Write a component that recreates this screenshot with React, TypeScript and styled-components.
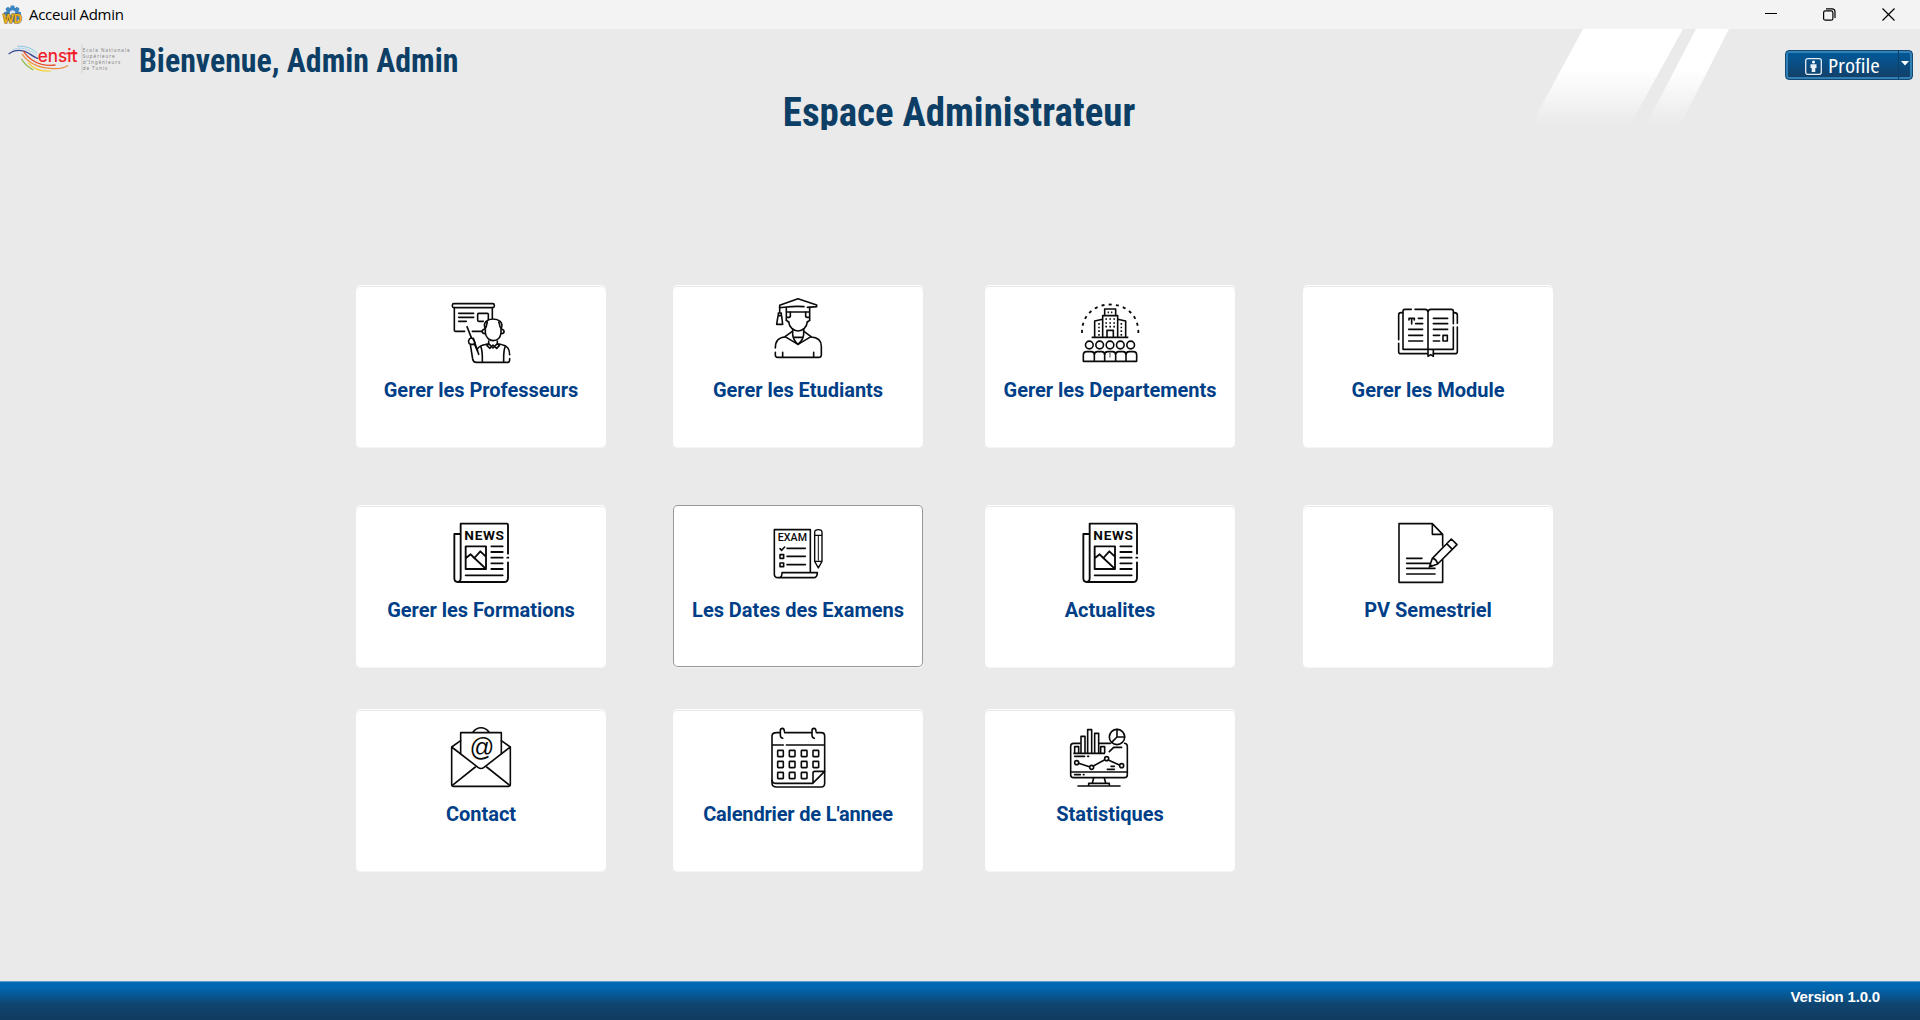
import React from "react";
import styled, { createGlobalStyle } from "styled-components";

const GlobalStyle = createGlobalStyle`
  html, body { margin: 0; padding: 0; overflow: hidden; }
  * { box-sizing: border-box; }
`;

const Window = styled.div`
  width: 1920px;
  height: 1020px;
  display: flex;
  flex-direction: column;
  background: #eaeaea;
  font-family: Roboto, "Liberation Sans", sans-serif;
  overflow: hidden;
`;

const TitleBar = styled.header`
  height: 29px;
  flex: none;
  display: flex;
  align-items: center;
  justify-content: space-between;
  background: #f3f3f3;
`;

const TitleGroup = styled.div`
  display: flex;
  align-items: center;
  gap: 6px;
  padding-left: 2px;
`;

const TitleText = styled.span`
  margin-top: -2px;
  font: 400 15px/20px "Open Sans", sans-serif;
  letter-spacing: -0.3px;
  color: #000;
`;

const WindowControls = styled.div`
  display: flex;
  gap: 46px;
  padding-right: 25px;
  svg { display: block; }
`;

const TopArea = styled.section`
  height: 256px;
  flex: none;
  display: flex;
  flex-direction: column;
  position: relative;
`;

const Slashes = styled.svg`
  position: absolute;
  left: 1530px;
  top: 0;
`;

const TopRow = styled.div`
  height: 59px;
  display: flex;
  align-items: flex-start;
  padding: 0 7px;
`;

const Logo = styled.svg`
  margin-top: 14px;
  flex: none;
  overflow: visible;
`;

const Welcome = styled.h1`
  margin: 12px 0 0 9px;
  font: 700 33px/40px "Roboto Condensed", Roboto, sans-serif;
  font-stretch: 75%;
  color: #0d3f66;
  white-space: nowrap;
  transform: scaleX(0.965);
  transform-origin: 0 0;
`;

const ProfileButton = styled.button`
  margin: 21px 0 0 auto;
  width: 128px;
  height: 30px;
  padding: 0;
  display: flex;
  align-items: stretch;
  border: 1px solid #124a75;
  border-radius: 4px;
  background: linear-gradient(#005a9c, #143f66);
  box-shadow: inset 0 0 0 2px #3280b4;
  position: relative;
`;

const ProfileMain = styled.span`
  width: 113px;
  display: flex;
  align-items: center;
  gap: 6px;
  padding: 2px 0 0 19px;
  border-right: 1px solid #0d3f68;
  svg { flex: none; }
`;

const ProfileLabel = styled.span`
  font: 400 20px/24px "Open Sans", sans-serif;
  font-stretch: 75%;
  color: #fff;
  transform: scaleX(1.15);
  transform-origin: 0 50%;
`;

const ProfileArrow = styled.span`
  flex: 1;
  display: flex;
  align-items: center;
  padding: 0 0 3px 2px;
`;

const PageTitle = styled.h2`
  margin: 0;
  height: 42px;
  overflow: hidden;
  padding-right: 2px;
  text-align: center;
  font: 700 41px/48px "Roboto Condensed", Roboto, sans-serif;
  font-stretch: 75%;
  color: #0d3f66;
  transform: scaleX(0.948);
`;

const Board = styled.main`
  flex: 1;
  display: grid;
  grid-template-columns: 317px 312px 318px 250px;
  grid-template-rows: 220px 204px 163px;
  padding-left: 356px;
`;

const Card = styled.button<{ $active?: boolean }>`
  width: 250px;
  height: ${(p) => (p.$active ? 162 : 163)}px;
  padding: 18px 0 0;
  display: flex;
  flex-direction: column;
  align-items: center;
  border: 0;
  border-radius: 5px;
  background: #fff;
  box-shadow: ${(p) =>
    p.$active
      ? "inset 0 0 0 1px #989898, 0 1px #f3f3f3"
      : "inset 0 1px #ffffff, inset 0 2px #e9e9e9, inset 0 -1px #f5f5f5"};
`;

const CardIcon = styled.svg`
  width: 60px;
  height: 60px;
  flex: none;
  overflow: visible;
  fill: none;
  stroke: #0a0a0a;
  stroke-width: 4.8;
  stroke-linecap: round;
  stroke-linejoin: round;
`;

const IconText = styled.text`
  fill: #0a0a0a;
  stroke: none;
`;

const CardLabel = styled.span<{ $tracking?: number }>`
  margin-top: 15px;
  font: 700 20px/24px Roboto, sans-serif;
  letter-spacing: ${(p) => p.$tracking ?? -0.03}px;
  color: #003f87;
  white-space: nowrap;
`;

const Footer = styled.footer`
  height: 39px;
  flex: none;
  display: flex;
  justify-content: flex-end;
  padding: 5px 40px 0 0;
  border-top: 1px solid #5b9cc9;
  background: linear-gradient(#0069b4 0, #0066b0 15%, #10446f 60%, #113b60 100%);
  font: 700 15px/20px "Liberation Sans", Arial, sans-serif;
  letter-spacing: -0.18px;
  color: #fff;
`;

const GearIcon = () => (
  <svg width="21" height="20" viewBox="0 0 21 20">
    <g fill="#3d83bf">
      <circle cx="10.5" cy="8.6" r="6.4" />
      {[0, 45, 90, 135, 180, 225, 270, 315].map((a) => (
        <rect key={a} x="8.5" y="0.4" width="4" height="4" rx="1" transform={`rotate(${a} 10.5 8.8)`} />
      ))}
    </g>
    <circle cx="10.5" cy="8" r="2.8" fill="#d5e6f3" />
    <text x="10.4" y="17.8" textAnchor="middle" fontFamily="Liberation Sans" fontWeight="700" fontSize="12.5" textLength="19" lengthAdjust="spacingAndGlyphs" fill="#eeb41c" stroke="#6b5210" strokeWidth="1" paintOrder="stroke">WD</text>
  </svg>
);

const EnsitLogo = () => (
  <Logo width="123" height="32" viewBox="20 130 369 96" fill="none" strokeLinecap="round">
    <path d="M26 162 C45 148 70 150 84 160 C96 168 104 174 112 176" stroke="#3a4a94" strokeWidth="4" />
    <path d="M38 150 C60 140 84 146 108 166" stroke="#a9d4ea" strokeWidth="3" />
    <path d="M52 140 C76 138 96 146 110 160" stroke="#8ac7e6" strokeWidth="3" />
    <path d="M70 156 C84 176 100 188 124 194 C142 198 152 198 164 196" stroke="#e8502c" strokeWidth="4" />
    <path d="M66 164 C86 192 116 204 150 206 C172 208 190 206 202 198" stroke="#ee8b3a" strokeWidth="3.5" />
    <path d="M64 178 C70 192 84 202 98 210" stroke="#8dbb4a" strokeWidth="3.5" />
    <path d="M84 190 C100 208 124 216 150 214" stroke="#f4d338" strokeWidth="3.5" />
    <text x="112" y="188" fontFamily="Inter" fontWeight="500" fontSize="52" textLength="119" lengthAdjust="spacingAndGlyphs" fill="#f21f2b">ensit</text>
    <path d="M200 161 H229" stroke="#f21f2b" strokeWidth="5" />
    <path d="M245 134 V220" stroke="#c9c9c9" strokeWidth="2" />
    <g fontFamily="Noto Sans" fontSize="14" fill="#858585">
      <text x="247" y="157" textLength="141">Ecole Nationale</text>
      <text x="247" y="175" textLength="96">Supérieure</text>
      <text x="247" y="193" textLength="113">d'Ingénieurs</text>
      <text x="247" y="210" textLength="74">de Tunis</text>
    </g>
  </Logo>
);

const TeacherIcon = () => (
  <CardIcon viewBox="333 84 180 180">
    <rect x="337" y="86" width="126" height="12" rx="5" />
    <path d="M343 98 V166 Q343 169 346 169 H374 M397 169 H426 M457 98 V130" />
    <path d="M356 115 H401 M356 127 H401 M356 139 H379" />
    <path d="M430 139 H416 Q413 139 413 136 V118 Q413 115 416 115 H442 Q445 115 445 118 V134" />
    <path d="M435 160 C428 142 443 132 459 132 C476 132 491 142 484 160 M442 142 C438 150 441 155 436 160 V174 C438 189 449 197 459 197 C471 197 481 189 483 174 V160 C477 155 481 148 476 142" />
    <path d="M434 162 C424 164 424 176 435 176 M484 162 C495 164 495 176 484 176" />
    <path d="M381 155 L394 188 M400 190 L416 238" />
    <path d="M394 188 C384 192 383 204 391 208 H401 C408 204 402 194 394 188 M391 208 L398 252 Q400 262 409 262 H504 Q509 262 509 251 M404 209 L412 227" />
    <path d="M413 221 C418 210 433 210 446 206 V198 M472 198 V206 C490 209 509 212 509 239 M446 206 L459 219 L472 206 M446 206 L441 212 L450 220 L459 210 L470 220 L478 212 L472 206" />
    <path d="M422 214 C428 225 427 240 427 260 M496 214 C490 225 491 240 491 260" />
  </CardIcon>
);

const StudentIcon = () => (
  <CardIcon viewBox="324 84 180 180">
    <path d="M432 95 C400 92 375 97 359 98 V91 L414 71 L470 90 V95 L442 97" />
    <path d="M359 97 V112 M355 114 H364 V122 H355 Z M354 123 L350 148 H368 L365 123 M379 98 V136 M449 98 V136 M381 111 H447" />
    <path d="M391 112 V125 Q385 128 381 127 M437 112 V125 Q443 128 448 127 M379 136 Q384 139 386 142 M449 136 Q444 139 442 142 M386 140 C387 156 401 168 414 168 C428 168 441 156 442 140" />
    <path d="M398 163 V178 C399 193 407 202 414 208 C421 202 430 193 431 178 V163" />
    <path d="M397 169 L375 185 L414 208 L453 185 L432 169 M402 187 H427" />
    <path d="M375 186 C356 187 346 198 346 219 M346 232 V240 Q346 247 353 247 H477 Q484 247 484 240 V214 C484 196 471 187 453 186 M368 232 V246 M461 232 V246" />
  </CardIcon>
);

const DepartmentIcon = () => (
  <CardIcon viewBox="330 84 180 180">
    <path d="M336 174 C334 60 507 60 505 174" pathLength="264" strokeDasharray="9 12.25" strokeWidth="5.4" strokeLinecap="butt" />
    <path d="M404 121 V102 H437 V121 M398 187 V122 H443 V187 M374 187 V138 L398 133 M467 187 V138 L443 133 M365 187 H475 M411 187 V166 H430 V187" strokeLinecap="butt" />
    <path d="M413 112 H429" strokeDasharray="4 6" strokeLinecap="butt" />
    <path d="M406 132 H436 M406 144 H436 M406 155 H436" strokeDasharray="5 7" strokeLinecap="butt" />
    <path d="M387 144 V186 M454 144 V186" strokeDasharray="5 6" strokeLinecap="butt" />
    {[358, 389, 420, 451, 482].map((x) => (
      <circle key={x} cx={x} cy="210" r="11.5" />
    ))}
    <path d="M340 259 V240 Q340 230 350 230 H364 Q373 230 373 240 Q373 230 382 230 H395 Q404 230 404 240 Q404 230 413 230 H428 Q437 230 437 240 Q437 230 446 230 H459 Q468 230 468 240 Q468 230 477 230 H490 Q500 230 500 240 V259 Z M373 240 V259 M404 240 V259 M437 240 V259 M468 240 V259" />
    <path d="M420 235 V246" strokeWidth="4" stroke="#777" />
  </CardIcon>
);

const BookIcon = () => (
  <CardIcon viewBox="324 84 180 180">
    <path d="M364 103 H345 Q339 103 339 109 V223 H490 V156 M490 146 V109 Q490 103 484 103 H423 Q414 103 414 112 V223 M414 112 Q414 103 405 103 H375" />
    <path d="M338 113 H333 Q326 113 326 120 V194 M326 205 V230 Q326 236 332 236 H413 M430 236 H495 Q502 236 502 230 V156 M502 145 V120 Q502 113 492 113" />
    <path d="M414 225 V244 L422 239 L430 244 V225 M357 135 V130 H373 V135 M365 130 V147 M385 130 H398 M377 146 H398 M356 163 H398 M356 181 H398 M356 198 H398" />
    <path d="M430 130 H473 M430 146 H473 M430 163 H473 M430 181 H449 M430 198 H449 M459 181 H472 V198 H459 Z" />
  </CardIcon>
);

const NewsIcon = () => (
  <CardIcon viewBox="333 84 180 180">
    <g strokeWidth="5.6">
      <path d="M504 176 V90 Q504 86 500 86 H362 V250 Q362 261 353 261 Q343 261 343 250 V117 H361 M353 261 H492 Q504 261 504 248 V202" />
      <path d="M502 188 H505 M377 154 H438 V222 H377 Z M378 189 L392 178 L403 189 L421 169 L437 184 M403 189 L437 221" />
      <path d="M454 154 H488 M454 171 H488 M454 188 H488 M454 205 H488 M454 222 H488 M377 241 H488" />
    </g>
    <IconText x="373" y="136" fontFamily="Roboto" fontWeight="700" fontSize="41" textLength="119">NEWS</IconText>
  </CardIcon>
);

const ExamIcon = () => (
  <CardIcon viewBox="324 84 180 180">
    <path d="M451 231 V104 H343 V237 Q343 248 354 248 H460 Q472 248 472 233 H366 Q367 248 354 248" />
    <path d="M360 161 L365 166 L374 156 M381 160 H436 M381 184 H436 M381 209 H436 M360 179 H371 V190 H360 Z M360 204 H371 V215 H360 Z" />
    <path d="M464 199 V112 Q464 104 475 104 Q486 104 486 112 V199 L475 219 Z M464 121 H486 M464 199 H486" strokeWidth="4.2" />
    <path d="M475 123 V197" strokeWidth="3" strokeLinecap="butt" />
    <path d="M473 214 H477" strokeWidth="3" />
    <IconText x="353" y="138" fontFamily="Roboto" fontWeight="500" fontSize="32" textLength="88" lengthAdjust="spacing">EXAM</IconText>
  </CardIcon>
);

const PvIcon = () => (
  <CardIcon viewBox="324 84 180 180">
    <path d="M458 153 V118 L427 86 H327 V262 H458 V194 M427 86 V118 H458" />
    <path d="M350 190 H396 M350 205 H421 M350 220 H435 M350 237 H435" />
    <path d="M418 216 L427 190 L484 132 L501 149 L443 207 Z M427 190 Q439 191 443 207 M470 146 L487 163 M418 216 L425 211" />
  </CardIcon>
);

const ContactIcon = () => (
  <CardIcon viewBox="333 81 180 180">
    <path d="M335 141 V254 Q335 259 340 259 H506 Q511 259 511 254 V141 L432 202 Q423 209 414 202 Z M335 141 L362 122 M511 141 L484 122" />
    <path d="M362 161 V98 H484 V161 M399 96 C412 79 434 79 447 96 M337 256 L406 201 M509 256 L440 201" />
    <IconText x="388" y="169" fontFamily="Liberation Sans" fontSize="76" fontStyle="italic" textLength="74" lengthAdjust="spacingAndGlyphs">@</IconText>
  </CardIcon>
);

const CalendarIcon = () => (
  <CardIcon viewBox="324 81 180 180">
    <path d="M360 98 H350 Q336 98 336 108 V250 Q336 261 350 261 H484 Q494 261 494 250 V108 Q494 98 484 98 H469 M374 98 H455 M336 135 H370 M379 135 H494" />
    <path d="M361 105 V92 Q361 85 367 85 Q373 85 373 94 M361 105 Q361 113 368 115 M456 105 V92 Q456 85 462 85 Q468 85 468 94 M456 105 Q456 113 463 115" />
    {[151, 184, 217].map((y) =>
      [353, 388, 424, 459].map((x) =>
        y === 217 && x === 459 ? null : <rect key={`${x}-${y}`} x={x} y={y} width="17" height="19" rx="2" />
      )
    )}
    <path d="M336 241 Q337 250 348 250 H458 L494 214 H464 Q459 214 459 220 V250" />
  </CardIcon>
);

const StatsIcon = () => (
  <CardIcon viewBox="330 81 180 180">
    <path d="M330 130 H311 Q302 130 302 139 V224 Q302 233 311 233 H463 Q472 233 472 224 V139 Q472 132 464 130 M387 130 H421 M303 216 H471" />
    <path d="M310 160 H405 M314 159 V140 H326 V159 M333 159 V109 H345 V159 M353 159 V89 H365 V159 M374 159 V100 H386 V159 M392 159 V140 H404 V159" strokeLinecap="butt" />
    <circle cx="441" cy="111" r="23" />
    <path d="M441 88 V111 L425 127 M441 111 H464 M418 155 L431 142 H455 M314 169 H344 M353 169 H356 M423 199 H433 M412 208 H433 M314 224 H331 M340 224 H342" />
    <path d="M326 190 L358 200 M370 198 L403 180 M415 180 L448 195" />
    <circle cx="320" cy="188" r="6" />
    <circle cx="365" cy="202" r="6" />
    <circle cx="410" cy="176" r="6" />
    <circle cx="455" cy="197" r="6" />
    <path d="M371 234 L367 249 M403 234 L407 249 M356 258 V250 H418 V258 M324 258 H450" />
  </CardIcon>
);

const cards: { label: string; Icon: React.FC; active?: boolean; tracking?: number }[] = [
  { label: "Gerer les Professeurs", Icon: TeacherIcon },
  { label: "Gerer les Etudiants", Icon: StudentIcon },
  { label: "Gerer les Departements", Icon: DepartmentIcon },
  { label: "Gerer les Module", Icon: BookIcon },
  { label: "Gerer les Formations", Icon: NewsIcon },
  { label: "Les Dates des Examens", Icon: ExamIcon, active: true },
  { label: "Actualites", Icon: NewsIcon },
  { label: "PV Semestriel", Icon: PvIcon },
  { label: "Contact", Icon: ContactIcon },
  { label: "Calendrier de L'annee", Icon: CalendarIcon, tracking: -0.18 },
  { label: "Statistiques", Icon: StatsIcon },
];

export default function App() {
  return (
    <Window>
      <GlobalStyle />
      <TitleBar>
        <TitleGroup>
          <GearIcon />
          <TitleText>Acceuil Admin</TitleText>
        </TitleGroup>
        <WindowControls>
          <svg width="12" height="13" viewBox="0 0 12 13"><path d="M0 5.5 H12" stroke="#000" /></svg>
          <svg width="13" height="13" viewBox="0 0 13 13" fill="none" stroke="#000" strokeWidth="1.2">
            <rect x=".6" y="2.9" width="9.3" height="9.3" rx="1.8" />
            <path d="M3 .8 H9 Q12 .8 12 3.8 V10" />
          </svg>
          <svg width="13" height="13" viewBox="0 0 13 13"><path d="M.5 .5 L12.5 12.5 M12.5 .5 L.5 12.5" stroke="#000" strokeWidth="1.2" /></svg>
        </WindowControls>
      </TitleBar>
      <TopArea>
        <Slashes width="200" height="96" viewBox="0 0 200 96">
          <defs>
            <linearGradient id="fade" x1="0" y1="0" x2="0" y2="96" gradientUnits="userSpaceOnUse">
              <stop offset=".42" stopColor="#fff" />
              <stop offset=".75" stopColor="#fff" stopOpacity=".45" />
              <stop offset="1" stopColor="#fff" stopOpacity="0" />
            </linearGradient>
          </defs>
          <path d="M53 0 H153 L100 96 H1 Z M166 0 H199 L150 96 H116 Z" fill="url(#fade)" />
        </Slashes>
        <TopRow>
          <EnsitLogo />
          <Welcome>Bienvenue, Admin Admin</Welcome>
          <ProfileButton>
            <ProfileMain>
              <svg width="17" height="17" viewBox="0 0 17 17">
                <rect x=".7" y=".7" width="15.6" height="15.6" rx="2" fill="none" stroke="#e6edf4" strokeWidth="1.3" />
                <circle cx="8.5" cy="4.1" r="1.5" fill="#fff" />
                <path d="M5.5 6.2 H11.5 V10 H10.3 V14 H6.7 V10 H5.5 Z" fill="#e8f0f7" />
              </svg>
              <ProfileLabel>Profile</ProfileLabel>
            </ProfileMain>
            <ProfileArrow>
              <svg width="8" height="5" viewBox="0 0 8 5"><path d="M0 0 H8 L4 4.4 Z" fill="#fff" /></svg>
            </ProfileArrow>
          </ProfileButton>
        </TopRow>
        <PageTitle>Espace Administrateur</PageTitle>
      </TopArea>
      <Board>
        {cards.map(({ label, Icon, active, tracking }) => (
          <Card key={label} $active={active}>
            <Icon />
            <CardLabel $tracking={tracking}>{label}</CardLabel>
          </Card>
        ))}
      </Board>
      <Footer>Version 1.0.0</Footer>
    </Window>
  );
}
